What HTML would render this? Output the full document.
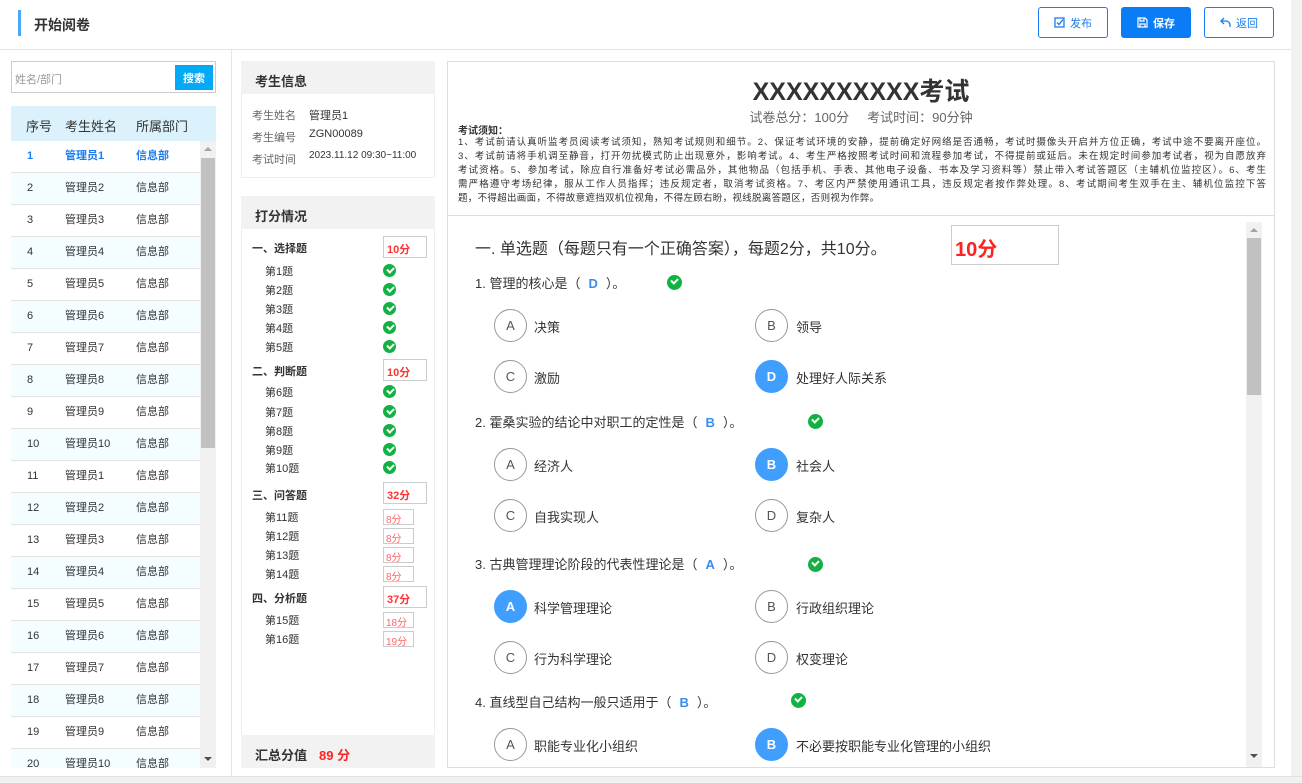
<!DOCTYPE html>
<html><head><meta charset="utf-8">
<style>
*{margin:0;padding:0;box-sizing:border-box}
body{width:1302px;height:783px;overflow:hidden;background:#fff;font-family:"Liberation Sans","Noto Sans CJK SC",sans-serif;color:#333;position:relative}
.a{position:absolute;white-space:nowrap}
.btn{position:absolute;top:7px;height:31px;width:70px;border:1px solid #1a7cf0;border-radius:3px;color:#1a7cf0;font-size:11px;display:flex;align-items:center;justify-content:center;gap:5px;background:#fff}
.row{position:absolute;left:11px;width:189px;height:32px;border-bottom:1px solid #e3e3e3;font-size:11px;color:#333}
.row span{position:absolute;top:0;line-height:31px}
.row.e{background:#f4fdff}
.chk{position:absolute;width:13px;height:13px;border-radius:50%;background:#13b143}
.chk:after{content:"";position:absolute;left:3.5px;top:2.5px;width:5px;height:3px;border-left:2px solid #fff;border-bottom:2px solid #fff;transform:rotate(-45deg)}
.lab{position:absolute;font-size:11px;color:#333}
.sub{position:absolute;font-size:11px;color:#333;left:265px;margin-top:-2px}
.sb{position:absolute;left:383px;width:44px;height:22px;border:1px solid #ccc;color:#f33;font-size:11px;font-weight:bold;padding:4px 0 0 3px}
.ss{position:absolute;left:383px;width:31px;height:16px;border:1px solid #ccc;color:#f66;font-size:10px;padding:1px 0 0 2px}
.q{position:absolute;left:475px;font-size:13px;color:#333;margin-top:-2px}
.q b{color:#3b8cf0;font-weight:bold;margin:0 8px}
.o{position:absolute;width:33px;height:33px;border:1px solid #999;border-radius:50%;font-size:13px;color:#555;display:flex;align-items:center;justify-content:center}
.o.s{background:#409eff;border-color:#409eff;color:#fff;font-weight:bold}
.ot{position:absolute;font-size:13px;color:#333;margin-top:-1px}
.rl{display:block;text-align:justify;text-align-last:justify;height:14px;white-space:nowrap}
</style></head><body>
<div class="a" style="left:18px;top:10px;width:3px;height:26px;background:#4aa8f8"></div>
<div class="a" style="left:34px;top:15px;font-size:14px;font-weight:bold;color:#333">开始阅卷</div>
<div class="btn" style="left:1038px"><svg width="11" height="11" viewBox="0 0 11 11"><rect x="1" y="1" width="9" height="9" fill="none" stroke="#1a7cf0" stroke-width="1.3"/><path d="M3 5.5l2 2 4-5" fill="none" stroke="#1a7cf0" stroke-width="1.4"/></svg>发布</div>
<div class="btn" style="left:1121px;background:#0a7cf5;border-color:#0a7cf5;color:#fff;font-weight:bold"><svg width="11" height="11" viewBox="0 0 11 11"><path d="M1 1h7l2 2v7H1z M3 1v3h4V1 M3 10V7h5v3" fill="none" stroke="#fff" stroke-width="1.2"/></svg>保存</div>
<div class="btn" style="left:1204px"><svg width="11" height="11" viewBox="0 0 11 11"><path d="M4 1L1 4l3 3 M1 4h5a4 4 0 0 1 4 4v2" fill="none" stroke="#1a7cf0" stroke-width="1.3"/></svg>返回</div>
<div class="a" style="left:0;top:49px;width:1291px;height:1px;background:#e2e2e2"></div>
<div class="a" style="left:1291px;top:0;width:11px;height:783px;background:#f1f1f1"></div>
<div class="a" style="left:0;top:776px;width:1302px;height:7px;background:#f1f1f1;border-top:1px solid #e2e2e2"></div>
<div class="a" style="left:231px;top:50px;width:1px;height:726px;background:#e5e5e5"></div>

<div class="a" style="left:11px;top:61px;width:205px;height:32px;border:1px solid #ccc"></div>
<div class="a" style="left:15px;top:71px;font-size:11px;color:#999">姓名/部门</div>
<div class="a" style="left:175px;top:65px;width:38px;height:25px;background:#03a9f4;color:#fff;font-size:11px;font-weight:bold;display:flex;align-items:center;justify-content:center">搜索</div>
<div class="a" style="left:11px;top:106px;width:205px;height:35px;background:#dbf1fb"></div>
<div class="a" style="left:26px;top:116px;font-size:13px;color:#333">序号</div>
<div class="a" style="left:65px;top:116px;font-size:13px;color:#333">考生姓名</div>
<div class="a" style="left:136px;top:116px;font-size:13px;color:#333">所属部门</div>
<div class="a" style="left:11px;top:141px;width:205px;height:627px;overflow:hidden">
<div style="position:relative;left:-11px;top:-141px">
<div class="row" style="top:141px;color:#1a7cf0;font-weight:bold"><span style="left:16px">1</span><span style="left:54px">管理员1</span><span style="left:125px">信息部</span></div>
<div class="row e" style="top:173px"><span style="left:16px">2</span><span style="left:54px">管理员2</span><span style="left:125px">信息部</span></div>
<div class="row" style="top:205px"><span style="left:16px">3</span><span style="left:54px">管理员3</span><span style="left:125px">信息部</span></div>
<div class="row e" style="top:237px"><span style="left:16px">4</span><span style="left:54px">管理员4</span><span style="left:125px">信息部</span></div>
<div class="row" style="top:269px"><span style="left:16px">5</span><span style="left:54px">管理员5</span><span style="left:125px">信息部</span></div>
<div class="row e" style="top:301px"><span style="left:16px">6</span><span style="left:54px">管理员6</span><span style="left:125px">信息部</span></div>
<div class="row" style="top:333px"><span style="left:16px">7</span><span style="left:54px">管理员7</span><span style="left:125px">信息部</span></div>
<div class="row e" style="top:365px"><span style="left:16px">8</span><span style="left:54px">管理员8</span><span style="left:125px">信息部</span></div>
<div class="row" style="top:397px"><span style="left:16px">9</span><span style="left:54px">管理员9</span><span style="left:125px">信息部</span></div>
<div class="row e" style="top:429px"><span style="left:16px">10</span><span style="left:54px">管理员10</span><span style="left:125px">信息部</span></div>
<div class="row" style="top:461px"><span style="left:16px">11</span><span style="left:54px">管理员1</span><span style="left:125px">信息部</span></div>
<div class="row e" style="top:493px"><span style="left:16px">12</span><span style="left:54px">管理员2</span><span style="left:125px">信息部</span></div>
<div class="row" style="top:525px"><span style="left:16px">13</span><span style="left:54px">管理员3</span><span style="left:125px">信息部</span></div>
<div class="row e" style="top:557px"><span style="left:16px">14</span><span style="left:54px">管理员4</span><span style="left:125px">信息部</span></div>
<div class="row" style="top:589px"><span style="left:16px">15</span><span style="left:54px">管理员5</span><span style="left:125px">信息部</span></div>
<div class="row e" style="top:621px"><span style="left:16px">16</span><span style="left:54px">管理员6</span><span style="left:125px">信息部</span></div>
<div class="row" style="top:653px"><span style="left:16px">17</span><span style="left:54px">管理员7</span><span style="left:125px">信息部</span></div>
<div class="row e" style="top:685px"><span style="left:16px">18</span><span style="left:54px">管理员8</span><span style="left:125px">信息部</span></div>
<div class="row" style="top:717px"><span style="left:16px">19</span><span style="left:54px">管理员9</span><span style="left:125px">信息部</span></div>
<div class="row e" style="top:749px"><span style="left:16px">20</span><span style="left:54px">管理员10</span><span style="left:125px">信息部</span></div>
<div class="a" style="left:200px;top:141px;width:16px;height:627px;background:#f1f1f1"></div>
<div class="a" style="left:201px;top:158px;width:14px;height:290px;background:#c1c1c1"></div>
<div class="a" style="left:204px;top:147px;width:0;height:0;border:4px solid transparent;border-bottom-color:#a3a3a3;border-top:0"></div>
<div class="a" style="left:204px;top:757px;width:0;height:0;border:4px solid transparent;border-top-color:#505050;border-bottom:0"></div>
</div></div>

<div class="a" style="left:241px;top:61px;width:194px;height:117px;border:1px solid #eee"></div>
<div class="a" style="left:241px;top:61px;width:194px;height:33px;background:#f2f2f2"></div>
<div class="a" style="left:255px;top:71px;font-size:13px;font-weight:bold;color:#333">考生信息</div>
<div class="a" style="left:252px;top:107px;font-size:11px;color:#666">考生姓名</div><div class="a" style="left:309px;top:107px;font-size:11px">管理员1</div>
<div class="a" style="left:252px;top:129px;font-size:11px;color:#666">考生编号</div><div class="a" style="left:309px;top:128px;font-size:11px">ZGN00089</div>
<div class="a" style="left:252px;top:151px;font-size:11px;color:#666">考试时间</div><div class="a" style="left:309px;top:150px;font-size:10px">2023.11.12 09:30~11:00</div>

<div class="a" style="left:241px;top:196px;width:194px;height:572px;border:1px solid #eee"></div>
<div class="a" style="left:241px;top:196px;width:194px;height:33px;background:#f2f2f2"></div>
<div class="a" style="left:255px;top:206px;font-size:13px;font-weight:bold;color:#333">打分情况</div>

<div class="lab" style="left:252px;top:240px;font-weight:bold">一、选择题</div><div class="sb" style="top:236px">10分</div>
<div class="sub" style="top:265px">第1题</div><div class="chk" style="left:383px;top:264px"></div>
<div class="sub" style="top:284px">第2题</div><div class="chk" style="left:383px;top:283px"></div>
<div class="sub" style="top:303px">第3题</div><div class="chk" style="left:383px;top:302px"></div>
<div class="sub" style="top:322px">第4题</div><div class="chk" style="left:383px;top:321px"></div>
<div class="sub" style="top:341px">第5题</div><div class="chk" style="left:383px;top:340px"></div>
<div class="lab" style="left:252px;top:363px;font-weight:bold">二、判断题</div><div class="sb" style="top:359px">10分</div>
<div class="sub" style="top:386px">第6题</div><div class="chk" style="left:383px;top:385px"></div>
<div class="sub" style="top:406px">第7题</div><div class="chk" style="left:383px;top:405px"></div>
<div class="sub" style="top:425px">第8题</div><div class="chk" style="left:383px;top:424px"></div>
<div class="sub" style="top:444px">第9题</div><div class="chk" style="left:383px;top:443px"></div>
<div class="sub" style="top:462px">第10题</div><div class="chk" style="left:383px;top:461px"></div>
<div class="lab" style="left:252px;top:487px;font-weight:bold">三、问答题</div><div class="sb" style="top:482px">32分</div>
<div class="sub" style="top:511px">第11题</div><div class="ss" style="top:509px">8分</div>
<div class="sub" style="top:530px">第12题</div><div class="ss" style="top:528px">8分</div>
<div class="sub" style="top:549px">第13题</div><div class="ss" style="top:547px">8分</div>
<div class="sub" style="top:568px">第14题</div><div class="ss" style="top:566px">8分</div>
<div class="lab" style="left:252px;top:590px;font-weight:bold">四、分析题</div><div class="sb" style="top:586px">37分</div>
<div class="sub" style="top:614px">第15题</div><div class="ss" style="top:612px">18分</div>
<div class="sub" style="top:633px">第16题</div><div class="ss" style="top:631px">19分</div>
<div class="a" style="left:241px;top:735px;width:194px;height:33px;background:#f2f2f2"></div>
<div class="a" style="left:255px;top:745px;font-size:13px;font-weight:bold;color:#333">汇总分值</div>
<div class="a" style="left:319px;top:745px;font-size:13px;font-weight:bold;color:#f22">89 分</div>

<div class="a" style="left:447px;top:61px;width:828px;height:707px;border:1px solid #ddd"></div>
<div class="a" style="left:447px;top:72px;width:828px;text-align:center;font-size:25px;font-weight:bold;color:#333">XXXXXXXXXX考试</div>
<div class="a" style="left:447px;top:107px;width:828px;text-align:center;font-size:13px;color:#666">试卷总分：100分&nbsp;&nbsp;&nbsp;&nbsp;&nbsp;考试时间：90分钟</div>
<div class="a" style="left:458px;top:122px;font-size:10px;font-weight:bold;color:#333">考试须知：</div>
<div class="a" style="left:458px;top:136px;width:808px;font-size:9.5px;color:#333;line-height:14px">
<span class="rl">1、考试前请认真听监考员阅读考试须知，熟知考试规则和细节。2、保证考试环境的安静，提前确定好网络是否通畅，考试时摄像头开启并方位正确，考试中途不要离开座位。</span>
<span class="rl">3、考试前请将手机调至静音，打开勿扰模式防止出现意外，影响考试。4、考生严格按照考试时间和流程参加考试，不得提前或延后。未在规定时间参加考试者，视为自愿放弃</span>
<span class="rl">考试资格。5、参加考试，除应自行准备好考试必需品外，其他物品（包括手机、手表、其他电子设备、书本及学习资料等）禁止带入考试答题区（主辅机位监控区）。6、考生</span>
<span class="rl">需严格遵守考场纪律，服从工作人员指挥；违反规定者，取消考试资格。7、考区内严禁使用通讯工具，违反规定者按作弊处理。8、考试期间考生双手在主、辅机位监控下答</span>
<span style="display:block;white-space:nowrap;letter-spacing:0.3px">题，不得超出画面，不得故意遮挡双机位视角，不得左顾右盼，视线脱离答题区，否则视为作弊。</span>
</div>
<div class="a" style="left:448px;top:215px;width:826px;height:1px;background:#ddd"></div>
<div class="a" style="left:1246px;top:222px;width:16px;height:545px;background:#f1f1f1"></div>
<div class="a" style="left:1247px;top:238px;width:14px;height:157px;background:#c1c1c1"></div>
<div class="a" style="left:1250px;top:228px;width:0;height:0;border:4px solid transparent;border-bottom-color:#a3a3a3;border-top:0"></div>
<div class="a" style="left:1250px;top:754px;width:0;height:0;border:4px solid transparent;border-top-color:#505050;border-bottom:0"></div>

<div class="a" style="left:475px;top:235px;font-size:16px;color:#333">一. 单选题（每题只有一个正确答案），每题2分，共10分。</div>
<div class="a" style="left:951px;top:225px;width:108px;height:40px;border:1px solid #ccc;color:#f22;font-size:20px;font-weight:bold;padding:7px 0 0 3px">10分</div>

<div class="q" style="top:275px">1. 管理的核心是（<b>D</b>）。</div><div class="chk" style="left:667px;top:275px;width:15px;height:15px"></div>
<div class="o" style="left:494px;top:309px">A</div><div class="ot" style="left:534px;top:318px">决策</div>
<div class="o" style="left:755px;top:309px">B</div><div class="ot" style="left:796px;top:318px">领导</div>
<div class="o" style="left:494px;top:360px">C</div><div class="ot" style="left:534px;top:369px">激励</div>
<div class="o s" style="left:755px;top:360px">D</div><div class="ot" style="left:796px;top:369px">处理好人际关系</div>

<div class="q" style="top:414px">2. 霍桑实验的结论中对职工的定性是（<b>B</b>）。</div><div class="chk" style="left:808px;top:414px;width:15px;height:15px"></div>
<div class="o" style="left:494px;top:448px">A</div><div class="ot" style="left:534px;top:457px">经济人</div>
<div class="o s" style="left:755px;top:448px">B</div><div class="ot" style="left:796px;top:457px">社会人</div>
<div class="o" style="left:494px;top:499px">C</div><div class="ot" style="left:534px;top:508px">自我实现人</div>
<div class="o" style="left:755px;top:499px">D</div><div class="ot" style="left:796px;top:508px">复杂人</div>

<div class="q" style="top:556px">3. 古典管理理论阶段的代表性理论是（<b>A</b>）。</div><div class="chk" style="left:808px;top:557px;width:15px;height:15px"></div>
<div class="o s" style="left:494px;top:590px">A</div><div class="ot" style="left:534px;top:599px">科学管理理论</div>
<div class="o" style="left:755px;top:590px">B</div><div class="ot" style="left:796px;top:599px">行政组织理论</div>
<div class="o" style="left:494px;top:641px">C</div><div class="ot" style="left:534px;top:650px">行为科学理论</div>
<div class="o" style="left:755px;top:641px">D</div><div class="ot" style="left:796px;top:650px">权变理论</div>

<div class="q" style="top:694px">4. 直线型自己结构一般只适用于（<b>B</b>）。</div><div class="chk" style="left:791px;top:693px;width:15px;height:15px"></div>
<div class="o" style="left:494px;top:728px">A</div><div class="ot" style="left:534px;top:737px">职能专业化小组织</div>
<div class="o s" style="left:755px;top:728px">B</div><div class="ot" style="left:796px;top:737px">不必要按职能专业化管理的小组织</div>
</body></html>
